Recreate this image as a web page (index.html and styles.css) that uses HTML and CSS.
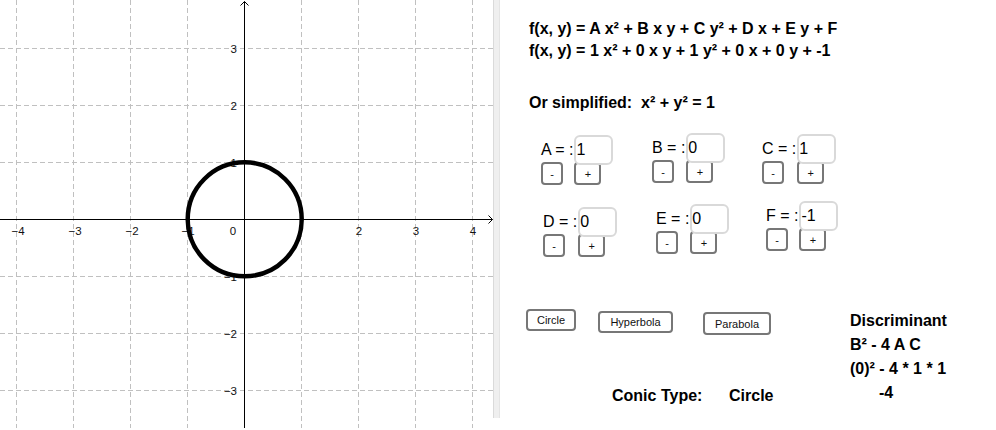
FILE: index.html
```html
<!DOCTYPE html>
<html>
<head>
<meta charset="utf-8">
<link rel="stylesheet" href="styles.css">
</head>
<body>
<div class="app">
  <div class="graph">
    <svg width="493" height="428" viewBox="0 0 493 428">
      <g class="grid">
        <line x1="16.5" y1="0" x2="16.5" y2="428"/>
        <line x1="73.5" y1="0" x2="73.5" y2="428"/>
        <line x1="130.5" y1="0" x2="130.5" y2="428"/>
        <line x1="187.5" y1="0" x2="187.5" y2="428"/>
        <line x1="301.5" y1="0" x2="301.5" y2="428"/>
        <line x1="358.5" y1="0" x2="358.5" y2="428"/>
        <line x1="415.5" y1="0" x2="415.5" y2="428"/>
        <line x1="472.5" y1="0" x2="472.5" y2="428"/>
        <line x1="0" y1="48.5" x2="493" y2="48.5"/>
        <line x1="0" y1="105.5" x2="493" y2="105.5"/>
        <line x1="0" y1="162.5" x2="493" y2="162.5"/>
        <line x1="0" y1="276.5" x2="493" y2="276.5"/>
        <line x1="0" y1="333.5" x2="493" y2="333.5"/>
        <line x1="0" y1="390.5" x2="493" y2="390.5"/>
      </g>
      <g class="axis">
        <line x1="0" y1="219.5" x2="492.5" y2="219.5"/>
        <line x1="244.5" y1="1.5" x2="244.5" y2="428"/>
        <polyline points="488.5,215.5 492.5,219.5 488.5,223.5"/>
        <polyline points="240.5,5.5 244.5,1.5 248.5,5.5"/>
      </g>
      <g class="ticks">
        <text x="18" y="235" text-anchor="middle">−4</text>
        <text x="75" y="235" text-anchor="middle">−3</text>
        <text x="132" y="235" text-anchor="middle">−2</text>
        <text x="188" y="235" text-anchor="middle">−1</text>
        <text x="233" y="235" text-anchor="middle">0</text>
        <text x="359" y="235" text-anchor="middle">2</text>
        <text x="416" y="235" text-anchor="middle">3</text>
        <text x="473" y="235" text-anchor="middle">4</text>
        <text x="237" y="52.5" text-anchor="end">3</text>
        <text x="237" y="109.5" text-anchor="end">2</text>
        <text x="237" y="166.5" text-anchor="end">1</text>
        <text x="237" y="280.5" text-anchor="end">−1</text>
        <text x="237" y="337.5" text-anchor="end">−2</text>
        <text x="237" y="394.5" text-anchor="end">−3</text>
      </g>
      <circle class="conic-curve" cx="244.7" cy="219.3" r="57"/>
    </svg>
  </div>
  <div class="divider"></div>
  <div class="panel">
    <div class="eq">
      <p>f(x, y) = A x² + B x y + C y² + D x + E y + F</p>
      <p>f(x, y) = 1 x² + 0 x y + 1 y² + 0 x + 0 y + -1</p>
      <p class="simp">Or simplified:&nbsp; x² + y² = 1</p>
    </div>
    <div class="groups">
      <div class="grp g-a"><span class="lbl">A = :</span><span class="inp">1</span><button class="btn minus">-</button><button class="btn plus">+</button></div>
      <div class="grp g-b"><span class="lbl">B = :</span><span class="inp">0</span><button class="btn minus">-</button><button class="btn plus">+</button></div>
      <div class="grp g-c"><span class="lbl">C = :</span><span class="inp">1</span><button class="btn minus">-</button><button class="btn plus">+</button></div>
      <div class="grp g-d"><span class="lbl">D = :</span><span class="inp">0</span><button class="btn minus">-</button><button class="btn plus">+</button></div>
      <div class="grp g-e"><span class="lbl">E = :</span><span class="inp">0</span><button class="btn minus">-</button><button class="btn plus">+</button></div>
      <div class="grp g-f"><span class="lbl">F = :</span><span class="inp">-1</span><button class="btn minus">-</button><button class="btn plus">+</button></div>
    </div>
    <div class="bottom">
      <div class="left">
        <div class="types">
          <button class="tbtn t-circle">Circle</button>
          <button class="tbtn t-hyper">Hyperbola</button>
          <button class="tbtn t-para">Parabola</button>
        </div>
        <div class="conic"><span class="ct">Conic Type:</span><span>Circle</span></div>
      </div>
      <div class="disc">
        <div>Discriminant</div>
        <div>B² - 4 A C</div>
        <div>(0)² - 4 * 1 * 1</div>
        <div class="res">-4</div>
      </div>
    </div>
  </div>
</div>
</body>
</html>
```
FILE: styles.css
```css
html, body {
  margin: 0;
  padding: 0;
  background: #fff;
}
body {
  font-family: "Liberation Sans", Arial, sans-serif;
  color: #000;
}
.app {
  display: flex;
  width: 996px;
  height: 430px;
  overflow: hidden;
}
.graph {
  flex: none;
  width: 493px;
  height: 428px;
}
.graph svg {
  display: block;
}
.grid line {
  stroke: #c0c0c0;
  stroke-width: 1;
  stroke-dasharray: 5 3;
}
.axis line,
.axis polyline {
  stroke: #000;
  stroke-width: 1;
  fill: none;
}
.ticks text {
  font-family: "Liberation Sans", Arial, sans-serif;
  font-size: 11.5px;
  fill: #111;
}
.conic-curve {
  fill: none;
  stroke: #000;
  stroke-width: 4.5;
}
.divider {
  flex: none;
  width: 7px;
  height: 418px;
  box-sizing: border-box;
  background: #efefef;
  border-left: 1px solid #dadada;
  border-right: 1px solid #e4e4e4;
}
.panel {
  flex: 1;
}
.eq {
  padding: 17.5px 0 0 29px;
  font-size: 16px;
  font-weight: bold;
}
.eq p {
  margin: 0;
  line-height: 22px;
}
.eq .simp {
  margin-top: 30px;
}
.groups {
  display: grid;
  grid-template-columns: 111px 110px 110px;
  grid-template-rows: 67px auto;
  margin: 19.5px 0 0 40px;
}
.grp {
  display: grid;
  grid-template-columns: auto auto;
  grid-template-rows: 27px 23px;
  column-gap: 1px;
  justify-content: start;
  align-items: start;
  margin-left: 1px;
}
.lbl {
  font-size: 16px;
  line-height: 18px;
  margin-top: 6px;
}
.inp {
  position: relative;
  z-index: 1;
  width: 39px;
  height: 30px;
  box-sizing: border-box;
  border: 2px solid #d9d9d9;
  border-radius: 6px;
  background: #fff;
  font-size: 16px;
  line-height: 26px;
  padding-left: 0;
}
.btn {
  height: 23px;
  padding: 0;
  box-sizing: border-box;
  border: 2px solid #777;
  border-radius: 4px;
  background: #fff;
  color: #111;
  font-family: "Liberation Sans", Arial, sans-serif;
  font-size: 11px;
  justify-self: start;
}
.minus {
  width: 22px;
}
.plus {
  width: 27px;
}
.g-a { margin-top: 2px; }
.g-b { margin-top: 0; }
.g-c { margin-top: 1px; }
.g-d { margin-top: 7px; margin-left: 3px; }
.g-e { margin-top: 4px; margin-left: 5px; }
.g-f { margin-top: 1px; margin-left: 5px; }
.bottom {
  display: flex;
  margin-top: 52px;
  padding-left: 26px;
}
.left {
  flex: none;
  width: 324px;
}
.types {
  display: flex;
  align-items: flex-start;
  height: 26px;
}
.tbtn {
  height: 22px;
  padding: 0;
  box-sizing: border-box;
  border: 2px solid #777;
  border-radius: 4px;
  background: #fff;
  color: #111;
  font-family: "Liberation Sans", Arial, sans-serif;
  font-size: 11px;
}
.t-circle {
  width: 50px;
}
.t-hyper {
  width: 75px;
  margin-left: 22px;
  margin-top: 2px;
}
.t-para {
  width: 68px;
  height: 23px;
  margin-left: 30px;
  margin-top: 3px;
}
.conic {
  display: flex;
  margin-top: 50.5px;
  padding-left: 86px;
  font-size: 16px;
  font-weight: bold;
  line-height: 20px;
}
.conic .ct {
  width: 117px;
}
.disc {
  margin-top: 0;
  font-size: 16px;
  font-weight: bold;
  line-height: 24px;
}
.disc .res {
  padding-left: 29px;
}
```
